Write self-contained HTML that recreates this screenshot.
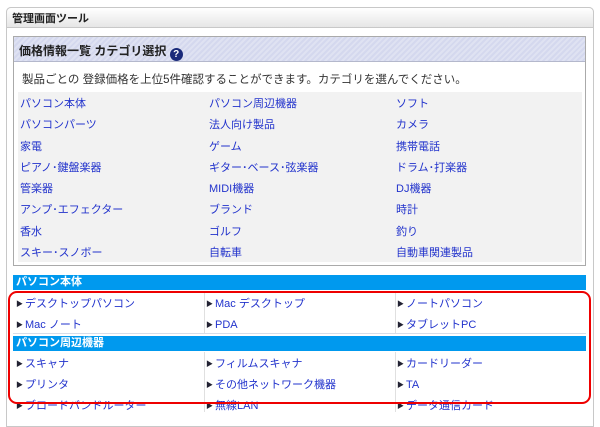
<!DOCTYPE html>
<html><head><meta charset="utf-8"><style>
*{margin:0;padding:0;box-sizing:border-box}
body{width:600px;height:406px;background:#fff;font-family:"Liberation Sans","Noto Sans CJK JP",sans-serif;font-size:11px;position:relative;overflow:hidden;color:#333}
.a{position:absolute;white-space:nowrap}
.outer{position:absolute;left:6px;top:7px;width:588px;height:420px;border:1px solid #c8c8c8;border-radius:5px 5px 0 0}
.oh{position:absolute;left:6px;top:7px;width:588px;height:21px;border:1px solid #c8c8c8;border-radius:5px 5px 0 0;background:linear-gradient(#fff,#e6e6e6);}
.inner{position:absolute;left:13px;top:36px;width:573px;height:230px;border:1px solid #aaa}
.ih{position:absolute;left:14px;top:37px;width:571px;height:25px;background:repeating-linear-gradient(135deg,#dfe2f2 0 2px,#d4d8ee 2px 4px);border-bottom:1px solid #b4b8cc}
.grid{position:absolute;left:18px;top:92px;width:564px;height:170px;background:#f2f2f2}
.l{color:#2233cc}
.bar{position:absolute;left:13px;width:573px;height:15px;background:#0099ee;color:#fff;font-weight:bold;padding-left:3px;line-height:15px;font-size:11px}
.sep{position:absolute;height:1px;left:13px;width:573px;background:#d8dde8}
.vs{position:absolute;width:1px;background:#e0e0e0}
.tri{font-size:7px;color:#223;vertical-align:1px;margin-right:2px}
</style></head><body>
<div class="outer"></div><div class="oh"></div>
<div class="a" style="left:12px;top:10px;font-weight:bold;font-size:11px;color:#222">管理画面ツール</div>
<div class="inner"></div><div class="ih"></div>
<div class="a" style="left:19px;top:42px;font-weight:bold;font-size:12px;color:#222">価格情報一覧 カテゴリ選択 <span style="display:inline-block;width:13px;height:13px;border-radius:50%;background:#1a2a7a;color:#fff;font-size:10px;text-align:center;line-height:13px;vertical-align:-2px">?</span></div>
<div class="a" style="left:22px;top:71px;font-size:11.5px;color:#333">製品ごとの 登録価格を上位5件確認することができます。カテゴリを選んでください。</div>
<div class="grid"></div>
<div class="a l" style="left:20px;top:94px;line-height:21.3px">パソコン本体<br>パソコンパーツ<br>家電<br>ピアノ･鍵盤楽器<br>管楽器<br>アンプ･エフェクター<br>香水<br>スキー･スノボー</div>
<div class="a l" style="left:209px;top:94px;line-height:21.3px">パソコン周辺機器<br>法人向け製品<br>ゲーム<br>ギター･ベース･弦楽器<br>MIDI機器<br>ブランド<br>ゴルフ<br>自転車</div>
<div class="a l" style="left:396px;top:94px;line-height:21.3px">ソフト<br>カメラ<br>携帯電話<br>ドラム･打楽器<br>DJ機器<br>時計<br>釣り<br>自動車関連製品</div>
<div class="bar" style="top:275px">パソコン本体</div>
<div class="sep" style="top:333px"></div>
<div class="vs" style="left:204px;top:291px;height:42px"></div><div class="vs" style="left:395px;top:291px;height:42px"></div>
<div class="bar" style="top:336px">パソコン周辺機器</div>
<div class="vs" style="left:204px;top:352px;height:60px"></div><div class="vs" style="left:395px;top:352px;height:60px"></div>
<div class="a l" style="left:16px;top:294px;line-height:20px"><span class="tri">▶</span>デスクトップパソコン<br><span class="tri">▶</span>Mac ノート</div>
<div class="a l" style="left:206px;top:294px;line-height:20px"><span class="tri">▶</span>Mac デスクトップ<br><span class="tri">▶</span>PDA</div>
<div class="a l" style="left:397px;top:294px;line-height:20px"><span class="tri">▶</span>ノートパソコン<br><span class="tri">▶</span>タブレットPC</div>
<div class="a l" style="left:16px;top:354px;line-height:20px"><span class="tri">▶</span>スキャナ<br><span class="tri">▶</span>プリンタ<br><span class="tri">▶</span>ブロードバンドルーター</div>
<div class="a l" style="left:206px;top:354px;line-height:20px"><span class="tri">▶</span>フィルムスキャナ<br><span class="tri">▶</span>その他ネットワーク機器<br><span class="tri">▶</span>無線LAN</div>
<div class="a l" style="left:397px;top:354px;line-height:20px"><span class="tri">▶</span>カードリーダー<br><span class="tri">▶</span>TA<br><span class="tri">▶</span>データ通信カード</div>
<div style="position:absolute;left:8px;top:291px;width:583px;height:113px;border:2px solid #e00;border-radius:9px"></div>
</body></html>
